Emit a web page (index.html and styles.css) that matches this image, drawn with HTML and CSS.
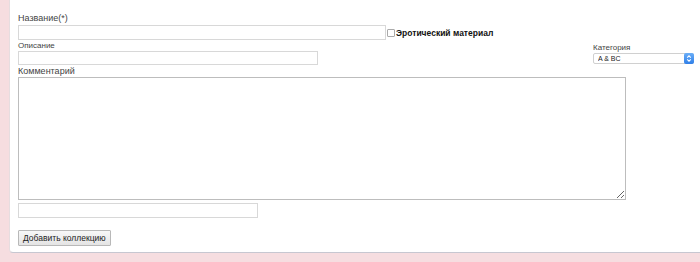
FILE: index.html
```html
<!DOCTYPE html>
<html lang="ru">
<head>
    <meta charset="UTF-8">
    <meta name="viewport" content="width=device-width, initial-scale=1.0">
    <title>Добавить коллекцию</title>
    <link rel="stylesheet" href="styles.css">
</head>
<body>
    <div class="panel">
        <form class="collection-form">
            <!-- Title -->
            <label class="label">Название(*)</label>
            <div class="row">
                <input type="text" class="field field-title">
                <label class="check">
                    <input type="checkbox" class="check-box">
                    <span>Эротический материал</span>
                </label>
            </div>

            <!-- Description + category -->
            <div class="row row-split">
                <div class="group">
                    <label class="label label-small">Описание</label>
                    <input type="text" class="field field-desc">
                </div>
                <div class="group group-category">
                    <label class="label label-small">Категория</label>
                    <div class="select-wrap">
                        <select class="select">
                            <option>A &amp; BC</option>
                        </select>
                        <span class="select-arrow">
                            <svg width="8" height="9" viewBox="0 0 8 9">
                                <path d="M2.2 3.6 L4 1.8 L5.8 3.6" fill="none" stroke="#fff" stroke-width="1.1"/>
                                <path d="M2.2 5.4 L4 7.2 L5.8 5.4" fill="none" stroke="#fff" stroke-width="1.1"/>
                            </svg>
                        </span>
                    </div>
                </div>
            </div>

            <!-- Comment -->
            <label class="label label-comment">Комментарий</label>
            <textarea class="comment"></textarea>
            <input type="text" class="field field-extra">

            <button type="button" class="submit">Добавить коллекцию</button>
        </form>
    </div>
</body>
</html>
```

FILE: styles.css
```css
body {
    margin: 0;
    padding: 0;
    background: #f6dde0;
    font-family: 'Liberation Sans', Arial, sans-serif;
    color: #444;
}
.panel {
    margin-left: 9px;
    height: 253px;
    box-sizing: border-box;
    background: #fff;
    border-bottom: 1px solid #c7c7d1;
    border-left: 1px solid #e6dde0;
    border-bottom-left-radius: 4px;
    padding: 12px 6px 0 8px;
}
.collection-form {
    display: flex;
    flex-direction: column;
    align-items: flex-start;
}
.label {
    display: block;
    font-size: 9px;
    line-height: 13px;
}
.label-small {
    font-size: 8px;
    line-height: 11px;
}
.label-comment {
    line-height: 12px;
}
.row {
    display: flex;
    align-items: center;
}
.row-split {
    align-self: stretch;
    align-items: flex-end;
    justify-content: space-between;
}
.field {
    display: block;
    box-sizing: border-box;
    height: 15px;
    margin: 0;
    padding: 0 3px;
    border: 1px solid #d8d8d8;
    font-size: 9px;
    font-family: inherit;
}
.field-title {
    width: 368px;
}
.field-desc {
    width: 300px;
    height: 14px;
}
.field-extra {
    width: 240px;
    margin-top: 3px;
}
.check {
    display: flex;
    align-items: center;
    font-size: 8.5px;
    font-weight: bold;
    color: #111;
}
.check-box {
    appearance: none;
    width: 8px;
    height: 8px;
    margin: 0 1px 0 1px;
    border: 1px solid #aaa;
    border-radius: 1px;
    background: #fff;
}
.group-category {
    margin-bottom: 1px;
}
.select-wrap {
    position: relative;
    width: 101px;
    height: 11px;
}
.select {
    display: block;
    appearance: none;
    box-sizing: border-box;
    width: 101px;
    height: 11px;
    margin: 0;
    padding: 0 0 0 4px;
    border: 1px solid #d0d0d0;
    border-radius: 2px;
    background: #fff;
    font-size: 7px;
    line-height: 9px;
    font-family: inherit;
    color: #222;
}
.select-arrow {
    position: absolute;
    right: 0;
    top: 0;
    width: 10px;
    height: 11px;
    border-radius: 2px;
    background: linear-gradient(#6aaef8, #2f7fe8);
    display: flex;
    align-items: center;
    justify-content: center;
}
.comment {
    display: block;
    box-sizing: border-box;
    width: 608px;
    height: 123px;
    margin: 0;
    border: 1px solid #bdbdbd;
    resize: both;
}
.submit {
    margin-top: 12px;
    height: 16px;
    padding: 0 4px;
    font-size: 8.5px;
    font-family: inherit;
    color: #222;
    background: linear-gradient(#f8f8f8, #e4e4e4);
    border: 1px solid #b8b8b8;
    border-radius: 1px;
}
```
